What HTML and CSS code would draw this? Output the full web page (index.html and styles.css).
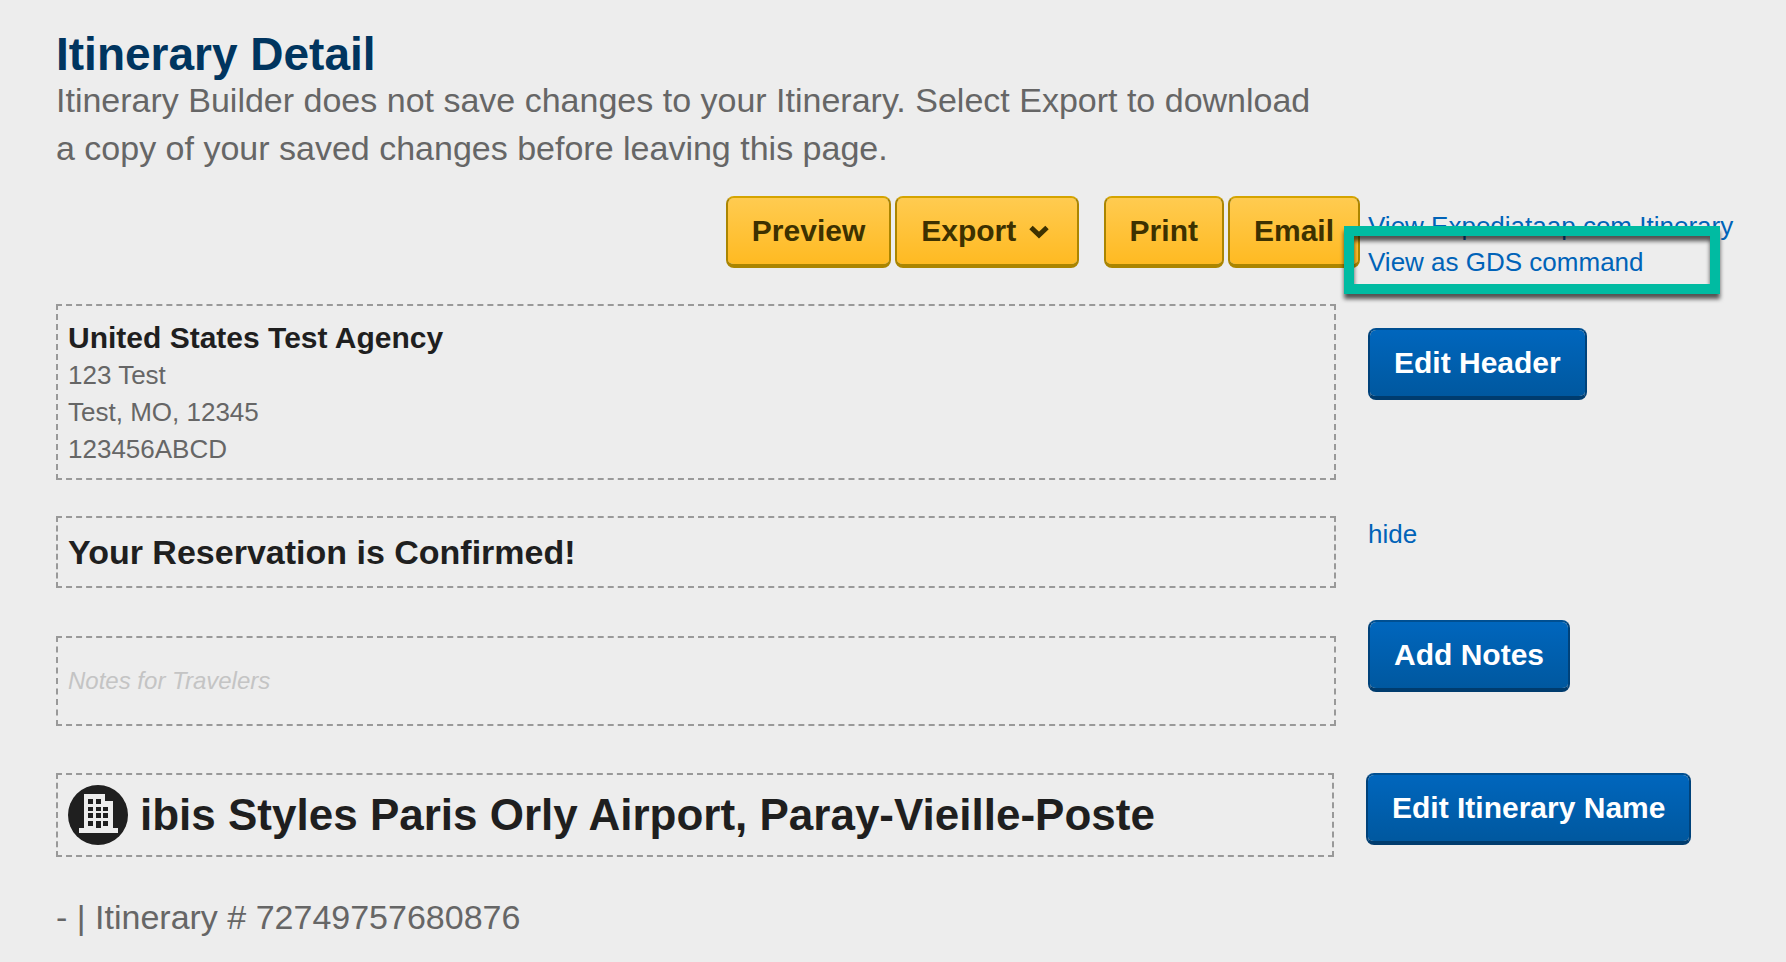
FILE: index.html
```html
<!DOCTYPE html>
<html lang="en">
<head>
    <meta charset="UTF-8">
    <meta name="viewport" content="width=device-width, initial-scale=1.0">
    <title>Itinerary Detail</title>
    <link rel="stylesheet" href="styles.css">
</head>
<body>
    <main class="page">
        <header class="intro">
            <h1>Itinerary Detail</h1>
            <p>Itinerary Builder does not save changes to your Itinerary. Select Export to download a copy of your saved changes before leaving this page.</p>
        </header>

        <div class="toolbar">
            <div class="actions">
                <div class="group">
                    <button type="button" class="btn btn-yellow">Preview</button>
                    <button type="button" class="btn btn-yellow">Export
                        <svg class="chevron" width="20" height="14" viewBox="0 0 20 14" aria-hidden="true">
                            <path d="M2 2.500 L10 10 L18 2.500" fill="none" stroke="currentColor" stroke-width="5"/>
                        </svg>
                    </button>
                </div>
                <div class="group">
                    <button type="button" class="btn btn-yellow">Print</button>
                    <button type="button" class="btn btn-yellow">Email</button>
                </div>
            </div>
            <div class="links">
                <a href="#">View Expediataap.com Itinerary</a>
                <a href="#">View as GDS command</a>
                <div class="highlight"></div>
            </div>
        </div>

        <section class="row row-header">
            <div class="box address">
                <h2>United States Test Agency</h2>
                <p>123 Test</p>
                <p>Test, MO, 12345</p>
                <p>123456ABCD</p>
            </div>
            <div class="side"><button type="button" class="btn btn-blue">Edit Header</button></div>
        </section>

        <section class="row row-status">
            <div class="box status"><h2>Your Reservation is Confirmed!</h2></div>
            <div class="side"><a href="#">hide</a></div>
        </section>

        <section class="row row-notes">
            <div class="box notes"><p>Notes for Travelers</p></div>
            <div class="side"><button type="button" class="btn btn-blue">Add Notes</button></div>
        </section>

        <section class="row row-name">
            <div class="box name">
                <svg class="hotel" width="60" height="60" viewBox="0 0 60 60" aria-hidden="true">
                    <circle cx="30" cy="30" r="30" fill="#1f1f1f"/>
                    <path fill="#ededed" d="M16 9h21v7h8v27h5v5H11v-5h5z"/>
                    <path fill="#1f1f1f" d="M20 14h5v5h-5zM28 14h5v5h-5zM20 22h5v4h-5zM28 22h5v4h-5zM35 22h5v4h-5zM20 28h5v5h-5zM28 28h5v5h-5zM35 28h5v5h-5zM20 36h5v5h-5zM28 36h5v7h-5zM35 36h5v5h-5z"/>
                </svg>
                <h2>ibis Styles Paris Orly Airport, Paray-Vieille-Poste</h2>
            </div>
            <div class="side"><button type="button" class="btn btn-blue">Edit Itinerary Name</button></div>
        </section>

        <p class="number">- | Itinerary # 72749757680876</p>
    </main>
</body>
</html>
```
FILE: styles.css
```css
* {
    box-sizing: border-box;
    margin: 0;
    padding: 0;
}
body {
    background-color: #ededed;
    color: #666;
    font-family: "Liberation Sans", Arial, sans-serif;
    font-size: 26px;
    line-height: 37px;
}
.page {
    padding: 32px 32px 0 56px;
}
h1, h2 {
    color: #1f1f1f;
    font-weight: bold;
}
a {
    color: #0063b8;
    text-decoration: none;
}
a:hover {
    text-decoration: underline;
}
.intro {
    max-width: 1280px;
}
.intro h1 {
    color: #00355f;
    font-size: 46px;
    line-height: 44px;
}
.intro p {
    font-size: 34px;
    line-height: 48px;
}
.toolbar {
    display: flex;
    align-items: flex-start;
    gap: 8px;
    margin: 24px 0;
}
.actions {
    display: flex;
    flex: 1;
    justify-content: flex-end;
    gap: 25px;
}
.group {
    display: flex;
    gap: 4px;
}
.links {
    position: relative;
    display: flex;
    flex-direction: column;
    width: 386px;
    padding-top: 12px;
    line-height: 36px;
    white-space: nowrap;
}
/* frame drawn over the links */
.highlight {
    position: absolute;
    top: 30px;
    left: -24px;
    width: 376px;
    height: 68px;
    border: 10px solid #00bba2;
    filter: drop-shadow(0 5px 2px rgba(0, 0, 0, 0.65));
    pointer-events: none;
}
.btn {
    height: 72px;
    padding: 0 24px;
    border: 2px solid;
    border-bottom-width: 4px;
    border-radius: 8px;
    font-family: inherit;
    font-size: 30px;
    font-weight: bold;
    white-space: nowrap;
    cursor: pointer;
}
.btn-yellow {
    background: linear-gradient(#ffcb50, #ffba22) padding-box;
    border-color: #d5a400 #ab8500 #ab8500;
    color: #3d3100;
}
.btn-blue {
    background: linear-gradient(#0066bd, #00589f) padding-box;
    border-color: #004f91 #00427a #003c6e;
    color: #fff;
}
.chevron {
    margin: 0 4px;
    vertical-align: 2px;
}
.row {
    display: grid;
    grid-template-columns: minmax(0, 1fr) 386px;
    gap: 32px;
    align-items: start;
}
.box {
    padding: 10px;
    border: 2px dashed #999;
}
.row-header {
    margin-bottom: 36px;
}
.row-header .side {
    padding-top: 24px;
}
.address {
    padding: 13px 10px 10px;
}
.address h2 {
    font-size: 30px;
    line-height: 38px;
}
.row-status {
    margin-bottom: 32px;
}
.status h2 {
    font-size: 34px;
    line-height: 48px;
}
.row-notes {
    margin-bottom: 47px;
}
.notes {
    margin-top: 16px;
    padding: 24px 10px;
    color: #c4c4c4;
    font-size: 24px;
    font-style: italic;
    line-height: 38px;
}
.row-name {
    grid-template-columns: minmax(0, 1fr) 388px;
    margin-bottom: 36px;
}
.name {
    display: flex;
    align-items: center;
    gap: 12px;
}
.name h2 {
    font-size: 44px;
    line-height: 60px;
}
.hotel {
    flex-shrink: 0;
}
.number {
    font-size: 34px;
    line-height: 48px;
}
```
